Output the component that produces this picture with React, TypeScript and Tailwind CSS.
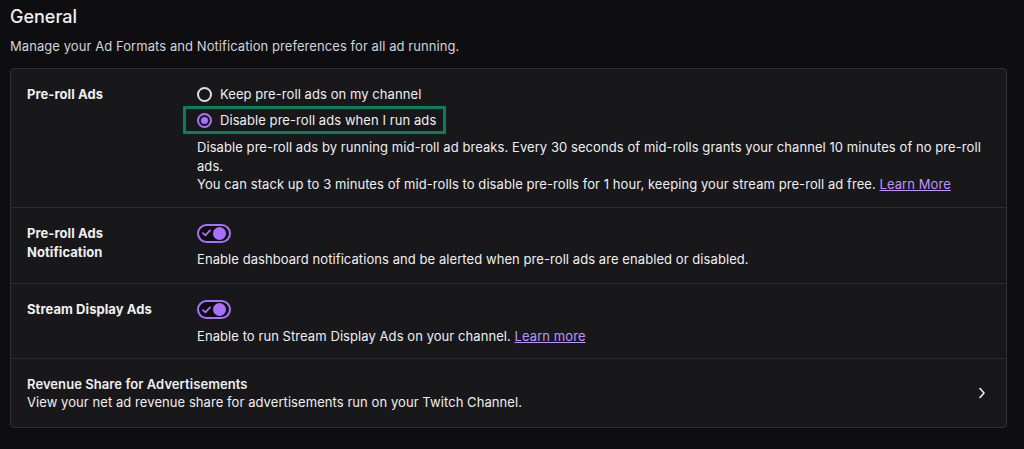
import React from "react";

const purple = "#a970ff";

function Radio({ checked, label }: { checked?: boolean; label: string }) {
  return (
    <label className="flex items-center gap-2 h-[18px] cursor-pointer">
      {checked ? (
        <span className="w-[15px] h-[15px] rounded-full border-2 border-[#a970ff] flex items-center justify-center">
          <span className="w-[7px] h-[7px] rounded-full bg-[#a970ff]" />
        </span>
      ) : (
        <span className="w-[15px] h-[15px] rounded-full border-2 border-[#dedee3]" />
      )}
      <span className="text-[13px] leading-[18px] text-[#efeff1]">{label}</span>
    </label>
  );
}

function Toggle() {
  return (
    <div className="w-[34px] h-[19px] rounded-full border-2 border-[#a970ff] bg-[#0e0e10] flex items-center justify-between px-[3px]">
      <svg width="9" height="8" viewBox="0 0 9 8" fill="none">
        <path d="M1 4.2L3.4 6.4L8 1.4" stroke={purple} strokeWidth="1.8" strokeLinecap="round" strokeLinejoin="round" />
      </svg>
      <span className="w-[13px] h-[13px] rounded-full bg-[#a970ff]" />
    </div>
  );
}

function Row({ label, children, pb = "pb-4" }: { label: React.ReactNode; children: React.ReactNode; pb?: string }) {
  return (
    <div className={`flex px-4 pt-4 ${pb} border-b border-[#2c2c30]`}>
      <div className="w-[170px] shrink-0 text-[13px] leading-[19px] font-bold text-[#efeff1]">{label}</div>
      <div className="flex-1">{children}</div>
    </div>
  );
}

export default function App() {
  return (
    <div className="min-h-screen w-[1024px] h-[449px] bg-[#0e0e10] text-[#efeff1] overflow-hidden tracking-[0.07px]" style={{ fontFamily: "Inter, 'Noto Sans', sans-serif" }}>
      <div className="px-[10px] pt-[5px]">
        <h2 className="text-[18px] leading-[24px] font-medium text-[#efeff1] tracking-normal">General</h2>
        <p className="mt-[8px] text-[13px] leading-[18px] text-[#d3d3d9]">
          Manage your Ad Formats and Notification preferences for all ad running.
        </p>

        <div className="mt-[13px] w-[997px] rounded-[4px] border border-[#2f2f34] bg-[#18181b]">
          <Row label="Pre-roll Ads" pb="pb-[13px]">
            <div className="flex flex-col gap-2">
              <Radio label="Keep pre-roll ads on my channel" />
              <div className="relative">
                <Radio checked label="Disable pre-roll ads when I run ads" />
                <div className="absolute left-[-14px] top-[-5px] w-[263px] h-[28px] border-[3px] border-[#0b7d5b] pointer-events-none" />
              </div>
            </div>
            <div className="mt-[9px] text-[13px] leading-[18.5px] text-[#efeff1] pr-2">
              <p>
                Disable pre-roll ads by running mid-roll ad breaks. Every 30 seconds of mid-rolls grants your channel 10 minutes of no pre-roll ads.
              </p>
              <p>
                You can stack up to 3 minutes of mid-rolls to disable pre-rolls for 1 hour, keeping your stream pre-roll ad free.{" "}
                <a className="text-[#bf94ff] underline">Learn More</a>
              </p>
            </div>
          </Row>

          <Row
            pb="pb-[15px]"
            label={
              <>
                Pre-roll Ads
                <br />
                Notification
              </>
            }
          >
            <Toggle />
            <p className="mt-[7px] text-[13px] leading-[18.5px]">
              Enable dashboard notifications and be alerted when pre-roll ads are enabled or disabled.
            </p>
          </Row>

          <Row label="Stream Display Ads" pb="pb-[12px]">
            <Toggle />
            <p className="mt-[8px] text-[13px] leading-[18.5px]">
              Enable to run Stream Display Ads on your channel.{" "}
              <a className="text-[#bf94ff] underline">Learn more</a>
            </p>
          </Row>

          <div className="flex items-center justify-between pl-4 pr-[20px] py-4">
            <div>
              <div className="text-[13px] leading-[18px] font-semibold">Revenue Share for Advertisements</div>
              <div className="text-[13px] leading-[18.5px]">
                View your net ad revenue share for advertisements run on your Twitch Channel.
              </div>
            </div>
            <svg width="8" height="12" viewBox="0 0 8 12" fill="none">
              <path d="M2 1.5L6 6L2 10.5" stroke="#efeff1" strokeWidth="1.6" strokeLinecap="round" strokeLinejoin="round" />
            </svg>
          </div>
        </div>
      </div>
    </div>
  );
}
